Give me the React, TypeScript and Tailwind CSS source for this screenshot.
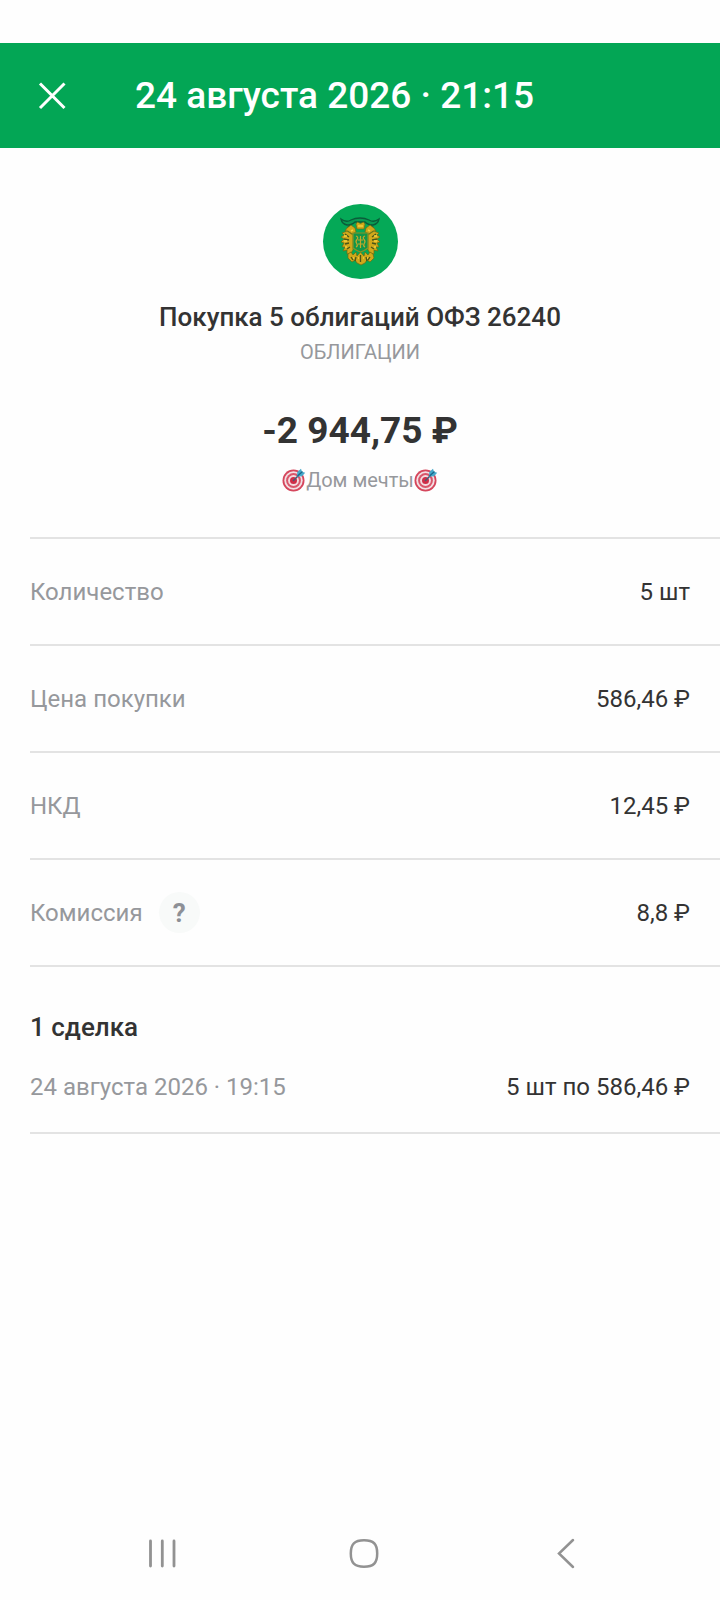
import type { ReactNode } from "react";

function TargetIcon() {
  return (
    <svg viewBox="0 0 24 24" className="size-6 shrink-0" role="img" aria-label="Цель">
      <circle cx="11.500" cy="12.500" r="11" fill="#d5465c" />
      <circle cx="11.500" cy="12.500" r="9.200" fill="#f3dfe3" />
      <circle cx="11.500" cy="12.500" r="7.400" fill="#d9566a" />
      <circle cx="11.500" cy="12.500" r="5.400" fill="#f3dbe0" />
      <circle cx="11.500" cy="12.500" r="3.500" fill="#cf2d47" />
      <path d="M11.500 12.500 18 6" stroke="#3f5f78" strokeWidth="1.500" strokeLinecap="round" />
      <path d="m15 8.500.3-4.500L19 .8l1 3 3.200 1L20 8.300z" fill="#45a9cb" />
      <path d="m15.500 8 5-4.500" stroke="#1c6688" strokeWidth="1.200" />
    </svg>
  );
}

function Crest() {
  return (
    <svg viewBox="0 0 76 76" className="size-[76px]" role="img" aria-label="ОФЗ">
      <circle cx="38.500" cy="38.500" r="37.500" fill="#05a957" />
      <path
        d="M19 16q5 4 10 1 4-2 9-2t9 2q5 3 10-1-1 5-6 6-5 0-8-3h-10q-3 3-8 3-5-1-6-6z"
        fill="#0b9a52"
        stroke="#0a5c39"
        strokeWidth="1.300"
      />
      <path d="M28 22q-4 4-1 6M49 22q4 4 1 6" stroke="#0a5c39" strokeWidth="1.500" fill="none" />
      <g fill="#d0a81a" stroke="#6a6a14" strokeWidth=".7">
        <path d="m34 21 1.500-2 3 1.500 3-1.500 1.500 2-1 5h-7z" />
        <path d="m29 22 4 3 1 4-4 2-4-3-3 0 2-3zM48 22l-4 3-1 4 4 2 4-3 3 0-2-3z" />
        <path d="m25 28-5 2 2 2-3 2 3 2-3 3 3 1-2 4 3 0-2 4 4-1 0 4 4-1 2-3V32zM52 28l5 2-2 2 3 2-3 2 3 3-3 1 2 4-3 0 2 4-4-1 0 4-4-1-2-3V32z" />
        <path d="m26 51 3-2 2 3 3-3 1 4 3.500-4 3.500 4 1-4 3 3 2-3 3 2 1 4-4 4-3-2-2 3-4 2-4-2-2-3-3 2-4-4z" />
      </g>
      <path d="M31 30h15v15q-4 3-7.500 4Q35 48 31 45z" fill="#129649" stroke="#8b9326" strokeWidth="1.200" />
      <path
        d="M34 33q3 1 1 3.500-2 2 0 4.500 1 2-1 3M43 33q-3 1-1 3.500 2 2 0 4.500-1 2 1 3M38.500 33v12M36 37h5M36 41h5"
        stroke="#c5a82b"
        strokeWidth="1.200"
        fill="none"
      />
      <path
        d="m23 31 4 3m-5 2 5 1m-4 4 4-1m-2 6 3-2m26-13-4 3m5 2-5 1m4 4-4-1m2 6-3-2M29 54l2 3m3-3-1 4m5.500-6v7m5.500-5 1 4m3-4-2 3"
        stroke="#48561a"
        strokeWidth="1.300"
        fill="none"
      />
      <path d="m22 33 3 0m-3 5 3 0m-2 6 2 0m30-11-3 0m3 5-3 0m2 6-2 0M36 23h5M29 28l2-1m17 1-2-1M31 55h1m4 0h1m4 0h1m3 0h1" stroke="#f4cf3d" strokeWidth="1.500" fill="none" />
    </svg>
  );
}

function DetailRow({ label, value, help }: { label: string; value: string; help?: ReactNode }) {
  return (
    <div className="flex h-[107px] items-center justify-between border-b-2 border-[#e3e3e3] pr-[30px]">
      <dt className="flex items-center gap-4 text-[#96989c]">
        {label}
        {help}
      </dt>
      <dd>{value}</dd>
    </div>
  );
}

export default function App() {
  return (
    <div className="flex min-h-screen flex-col bg-[#fefefe] pt-[43px] font-['Roboto','Noto_Sans',sans-serif] text-[#333333]">
      <header className="flex h-[105px] items-center bg-[#03a655] text-white">
        <button type="button" aria-label="Закрыть" className="ml-7 flex size-12 items-center justify-center">
          <svg viewBox="0 0 28 28" className="size-7" fill="none" stroke="currentColor" strokeWidth="3">
            <path d="m2 1.500 24.500 24.500M26.500 1.500 2 26" />
          </svg>
        </button>
        <h1 className="ml-[59px] text-[37px] font-medium leading-[48px]">24 августа 2026 · 21:15</h1>
      </header>

      <main className="flex flex-1 flex-col">
        <section className="flex flex-col items-center pt-[55px]">
          <Crest />
          <h2 className="mt-[21px] text-[26px] font-medium leading-[34px]">Покупка 5 облигаций ОФЗ 26240</h2>
          <p className="mt-[5px] text-[20px] leading-[26px] text-[#96989c]">ОБЛИГАЦИИ</p>
          <p className="mt-[42px] text-[37px] font-bold leading-[48px]">-2 944,75 ₽</p>
          <p className="mt-3 flex items-center text-[20px] leading-[26px] text-[#96989c]">
            <TargetIcon />
            Дом мечты
            <TargetIcon />
          </p>
        </section>

        <dl className="ml-[30px] mt-11 border-t-2 border-[#e3e3e3] text-[24px] leading-[32px]">
          <DetailRow label="Количество" value="5 шт" />
          <DetailRow label="Цена покупки" value="586,46 ₽" />
          <DetailRow label="НКД" value="12,45 ₽" />
          <DetailRow
            label="Комиссия"
            value="8,8 ₽"
            help={
              <button type="button" aria-label="О комиссии" className="flex size-[41px] items-center justify-center rounded-full bg-[#f8faf9] text-[26px] font-bold text-[#8d9096]">
                ?
              </button>
            }
          />
        </dl>

        <section className="ml-[30px] border-b-2 border-[#e3e3e3] pb-[29px] pr-[30px] pt-[43px]">
          <h2 className="text-[26px] font-medium leading-[34px]">1 сделка</h2>
          <div className="mt-[27px] flex justify-between text-[24px] leading-[32px]">
            <span className="text-[#96989c]">24 августа 2026 · 19:15</span>
            <span>5 шт по 586,46 ₽</span>
          </div>
        </section>
      </main>

      <nav className="flex h-[94px] items-center justify-around pl-[61px] pr-[53px] text-[#929292]" aria-label="Системная навигация">
        <button type="button" aria-label="Недавние приложения" className="flex size-12 items-center justify-center">
          <svg viewBox="0 0 32 32" className="size-8" fill="none" stroke="currentColor" strokeWidth="2.800" strokeLinecap="round">
            <path d="M4.500 4v25M16.300 4v25M28 4v25" />
          </svg>
        </button>
        <button type="button" aria-label="Главный экран" className="flex size-12 items-center justify-center">
          <svg viewBox="0 0 32 32" className="size-8" fill="none" stroke="currentColor" strokeWidth="2.500">
            <path d="M16 3.300c9.500 0 13.200 3.500 13.200 13.200S25.500 29.700 16 29.700 2.800 26 2.800 16.500 6.500 3.300 16 3.300z" />
          </svg>
        </button>
        <button type="button" aria-label="Назад" className="flex size-12 items-center justify-center">
          <svg viewBox="0 0 32 32" className="size-8" fill="none" stroke="currentColor" strokeWidth="2.500" strokeLinecap="round">
            <path d="M23 3 9 16.500l14 13.500" />
          </svg>
        </button>
      </nav>
    </div>
  );
}
